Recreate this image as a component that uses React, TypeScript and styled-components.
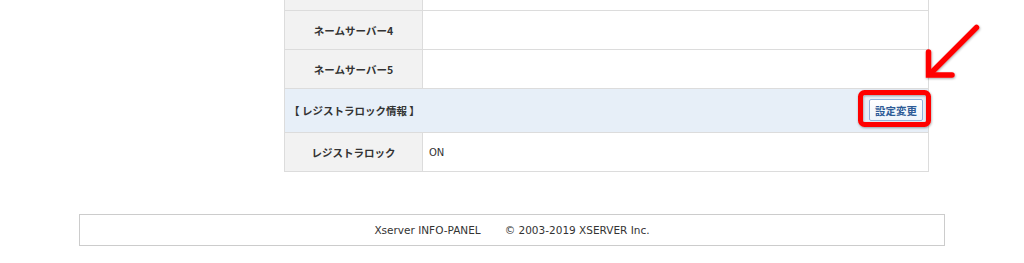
import React from "react";
import styled, { createGlobalStyle } from "styled-components";

const GlobalStyle = createGlobalStyle`
  html, body { margin: 0; padding: 0; background: #ffffff; }
  body { font-family: "DejaVu Sans", Verdana, "Noto Sans CJK JP", sans-serif; color: #333; }
`;

const Page = styled.div`
  position: relative;
  width: 1024px;
  height: 263px;
  overflow: hidden;
  display: flex;
  flex-direction: column;
`;

const Main = styled.div`
  width: 866px;
  margin: 0 auto;
  display: flex;
`;

const Sidebar = styled.div`
  width: 205px;
  flex: none;
`;

const Table = styled.div`
  width: 645px;
  box-sizing: border-box;
  border: 1px solid #dcdcdc;
  border-top: none;
`;

const Row = styled.div<{ $first?: boolean }>`
  display: grid;
  grid-template-columns: 138px 1fr;
  height: ${(p) => (p.$first ? "10px" : "38px")};
  border-top: ${(p) => (p.$first ? "none" : "1px solid #dcdcdc")};
`;

const Label = styled.div`
  background: #f2f2f2;
  border-right: 1px solid #dcdcdc;
  display: flex;
  align-items: center;
  justify-content: center;
  font-family: "Noto Sans CJK JP", sans-serif;
  font-weight: 700;
  font-size: 10.5px;
  color: #333;
`;

const Value = styled.div`
  display: flex;
  align-items: center;
  padding-left: 6px;
  font-family: "DejaVu Sans", "Noto Sans CJK JP", sans-serif;
  font-size: 10px;
  color: #333;
`;

const SectionRow = styled.div`
  display: flex;
  align-items: center;
  justify-content: space-between;
  height: 43px;
  border-top: 1px solid #dcdcdc;
  background: #e7eff8;
  padding: 0 5px 0 4px;
`;

const SectionTitle = styled.div`
  font-family: "Noto Sans CJK JP", sans-serif;
  font-weight: 700;
  font-size: 10.5px;
  color: #333;
`;

const Button = styled.button`
  height: 22px;
  width: 54px;
  padding: 0;
  margin-top: -1px;
  box-sizing: border-box;
  border: 1px solid #93b3da;
  border-radius: 2px;
  background: linear-gradient(#ffffff, #eef4fb);
  font-family: "Noto Sans CJK JP", sans-serif;
  font-weight: 700;
  font-size: 10.5px;
  color: #2d5b97;
  display: flex;
  align-items: center;
  justify-content: center;
`;

const Footer = styled.div`
  width: 866px;
  height: 32px;
  box-sizing: border-box;
  margin: 42px auto 0;
  border: 1px solid #cccccc;
  display: flex;
  align-items: center;
  justify-content: center;
  gap: 24px;
  font-family: "DejaVu Sans", Verdana, sans-serif;
  font-size: 10.5px;
  color: #333;
`;

const Overlay = styled.svg`
  position: absolute;
  left: 0;
  top: 0;
  pointer-events: none;
`;

export default function App() {
  return (
    <>
      <GlobalStyle />
      <Page>
        <Main>
          <Sidebar />
          <Table>
            <Row $first>
              <Label />
              <Value />
            </Row>
            <Row>
              <Label>ネームサーバー4</Label>
              <Value />
            </Row>
            <Row>
              <Label>ネームサーバー5</Label>
              <Value />
            </Row>
            <SectionRow>
              <SectionTitle>【 レジストラロック情報 】</SectionTitle>
              <Button>設定変更</Button>
            </SectionRow>
            <Row>
              <Label>レジストラロック</Label>
              <Value>ON</Value>
            </Row>
          </Table>
        </Main>
        <Footer>
          <span>Xserver INFO-PANEL</span>
          <span>© 2003-2019 XSERVER Inc.</span>
        </Footer>
        <Overlay width="1024" height="263" viewBox="0 0 1024 263">
          <defs>
            <filter id="sh" x="-20%" y="-20%" width="140%" height="140%">
              <feDropShadow dx="0.5" dy="1" stdDeviation="0.8" floodColor="#000" floodOpacity="0.35" />
            </filter>
          </defs>
          <g filter="url(#sh)" stroke="#ff0000" fill="none">
            <rect x="860.5" y="92.5" width="68" height="32" rx="4" strokeWidth="5" />
            <line x1="976.5" y1="27.5" x2="931" y2="73" strokeWidth="5.5" strokeLinecap="round" />
            <polyline points="928.5,52 928.5,75 952,75" strokeWidth="5.5" strokeLinecap="round" strokeLinejoin="miter" />
          </g>
        </Overlay>
      </Page>
    </>
  );
}
